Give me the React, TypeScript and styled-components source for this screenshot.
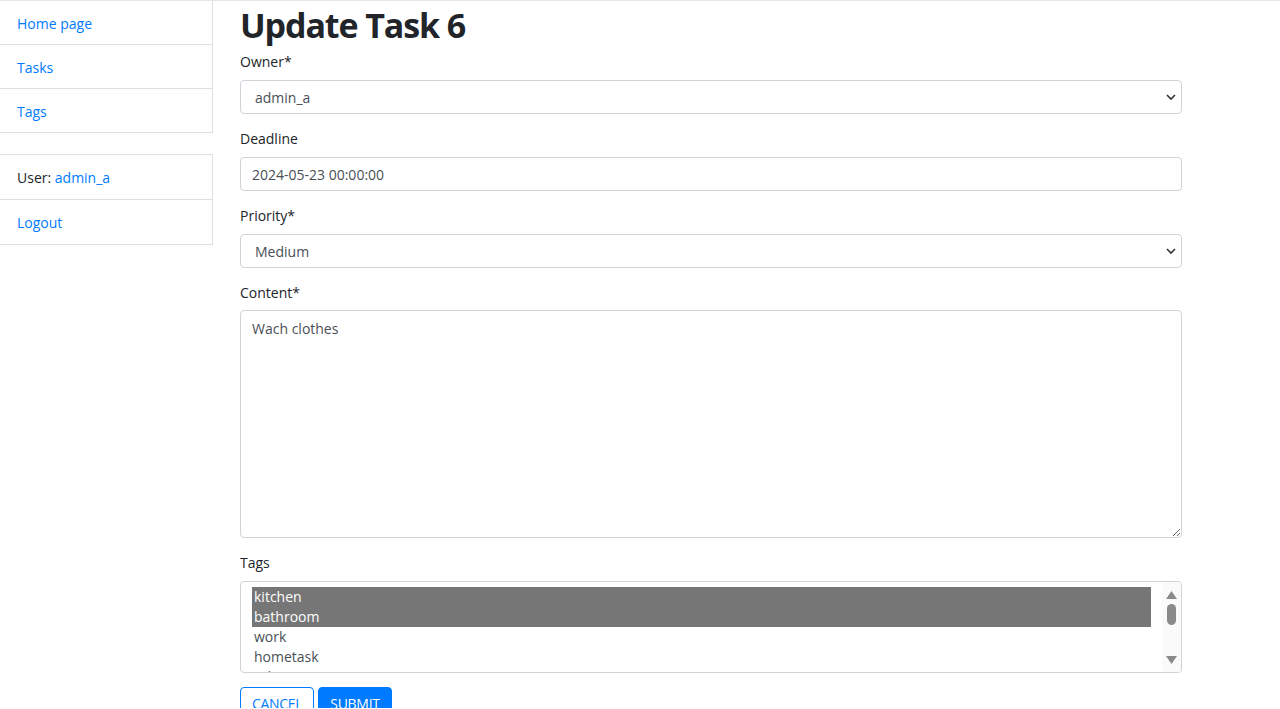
import React from "react";
import styled, { createGlobalStyle } from "styled-components";

const Global = createGlobalStyle`
  html, body { margin: 0; padding: 0; background: #fff; }
  body {
    font-family: "Open Sans", "Noto Sans", sans-serif;
    font-size: 14px;
    line-height: 1.5;
    color: #212529;
    border-top: 1px solid #e6e6e6;
    overflow: hidden;
    height: 708px;
  }
  * { box-sizing: border-box; }
`;

const Page = styled.div`
  display: flex;
  align-items: flex-start;
  gap: 27px;
`;

const Sidebar = styled.aside`
  width: 213px;
  display: flex;
  flex-direction: column;
  gap: 21px;
`;

const ListGroup = styled.ul<{ $first?: boolean }>`
  list-style: none;
  margin: 0;
  padding: 0;
  border-right: 1px solid rgba(0, 0, 0, 0.125);
  border-bottom: 1px solid rgba(0, 0, 0, 0.125);
  border-top: ${(p) => (p.$first ? "none" : "1px solid rgba(0, 0, 0, 0.125)")};
`;

const ListItem = styled.li<{ $tall?: boolean }>`
  padding: 12px 17px ${(p) => (p.$tall ? "11px" : "10px")};
  line-height: 21px;
  & + & { border-top: 1px solid rgba(0, 0, 0, 0.125); }
`;

const Link = styled.a`
  color: #007bff;
  text-decoration: none;
`;

const Main = styled.main`
  width: 942px;
  display: flex;
  flex-direction: column;
`;

const Title = styled.h1`
  margin: 0 0 3px;
  font-size: 34px;
  font-weight: 700;
  line-height: 48px;
  letter-spacing: -1.1px;
`;

const Group = styled.div`
  display: flex;
  flex-direction: column;
  margin-bottom: 15px;
`;

const Label = styled.label<{ $tight?: boolean }>`
  line-height: 20px;
  margin-bottom: ${(p) => (p.$tight ? "7px" : "8px")};
`;

const SelectWrap = styled.div`
  position: relative;
`;

const Select = styled.select`
  appearance: none;
  width: 100%;
  height: 34px;
  padding: 0 30px 0 14px;
  font: inherit;
  color: #495057;
  background: #fff;
  border: 1px solid #ced4da;
  border-radius: 4px;
`;

const Chevron = styled.svg`
  position: absolute;
  right: 6px;
  top: 12px;
  pointer-events: none;
`;

const Input = styled.input`
  height: 34px;
  padding: 0 11px;
  font: inherit;
  color: #495057;
  border: 1px solid #ced4da;
  border-radius: 4px;
`;

const TextArea = styled.textarea`
  height: 228px;
  padding: 7px 11px;
  font: inherit;
  color: #495057;
  border: 1px solid #ced4da;
  border-radius: 4px;
  resize: vertical;
  line-height: 21px;
`;

const ListBox = styled.div`
  position: relative;
  height: 92px;
  border: 1px solid #ced4da;
  border-radius: 4px;
  padding: 5px 30px 0 11px;
  overflow: hidden;
  background: #fff;
`;

const Option = styled.div<{ $selected?: boolean }>`
  height: 20px;
  line-height: 20px;
  padding-left: 2px;
  color: ${(p) => (p.$selected ? "#fff" : "#495057")};
  background: ${(p) => (p.$selected ? "#767676" : "transparent")};
`;

const ScrollBar = styled.div`
  position: absolute;
  top: 0;
  right: 0;
  bottom: 0;
  width: 19px;
  background: #fafafa;
  display: flex;
  flex-direction: column;
  align-items: center;
  padding-top: 9px;
`;

const Thumb = styled.div`
  width: 9px;
  height: 21px;
  border-radius: 5px;
  background: #8a8a8a;
  margin-top: 5px;
`;

const ArrowDown = styled.svg`
  margin-top: auto;
  margin-bottom: 8px;
`;

const Buttons = styled.div`
  display: flex;
  gap: 4px;
  margin-top: -1px;
`;

const Button = styled.button<{ $primary?: boolean }>`
  font: inherit;
  text-transform: uppercase;
  padding: 5px 11px;
  line-height: 21px;
  border-radius: 4px;
  border: 1px solid #007bff;
  color: ${(p) => (p.$primary ? "#fff" : "#007bff")};
  background: ${(p) => (p.$primary ? "#007bff" : "#fff")};
  letter-spacing: -0.3px;
`;

const SelectField = ({ value }: { value: string }) => (
  <SelectWrap>
    <Select defaultValue={value}>
      <option>{value}</option>
    </Select>
    <Chevron width="10" height="10" viewBox="0 0 10 10">
      <path d="M1 3 L5 7 L9 3" fill="none" stroke="#333" strokeWidth="1.6" />
    </Chevron>
  </SelectWrap>
);

export default function App() {
  return (
    <>
      <Global />
      <Page>
        <Sidebar>
          <ListGroup $first>
            <ListItem><Link href="#">Home page</Link></ListItem>
            <ListItem><Link href="#">Tasks</Link></ListItem>
            <ListItem><Link href="#">Tags</Link></ListItem>
          </ListGroup>
          <ListGroup>
            <ListItem $tall>User: <Link href="#">admin_a</Link></ListItem>
            <ListItem $tall><Link href="#">Logout</Link></ListItem>
          </ListGroup>
        </Sidebar>
        <Main>
          <Title>Update Task 6</Title>
          <Group>
            <Label>Owner*</Label>
            <SelectField value="admin_a" />
          </Group>
          <Group>
            <Label>Deadline</Label>
            <Input defaultValue="2024-05-23 00:00:00" />
          </Group>
          <Group>
            <Label>Priority*</Label>
            <SelectField value="Medium" />
          </Group>
          <Group>
            <Label $tight>Content*</Label>
            <TextArea defaultValue="Wach clothes" />
          </Group>
          <Group>
            <Label>Tags</Label>
            <ListBox>
              <Option $selected>kitchen</Option>
              <Option $selected>bathroom</Option>
              <Option>work</Option>
              <Option>hometask</Option>
              <Option>other</Option>
              <ScrollBar>
                <svg width="11" height="8" viewBox="0 0 11 8">
                  <path d="M5.5 0 L11 8 L0 8 Z" fill="#8a8a8a" />
                </svg>
                <Thumb />
                <ArrowDown width="11" height="8" viewBox="0 0 11 8">
                  <path d="M0 0 L11 0 L5.5 8 Z" fill="#8a8a8a" />
                </ArrowDown>
              </ScrollBar>
            </ListBox>
          </Group>
          <Buttons>
            <Button>Cancel</Button>
            <Button $primary>Submit</Button>
          </Buttons>
        </Main>
      </Page>
    </>
  );
}
